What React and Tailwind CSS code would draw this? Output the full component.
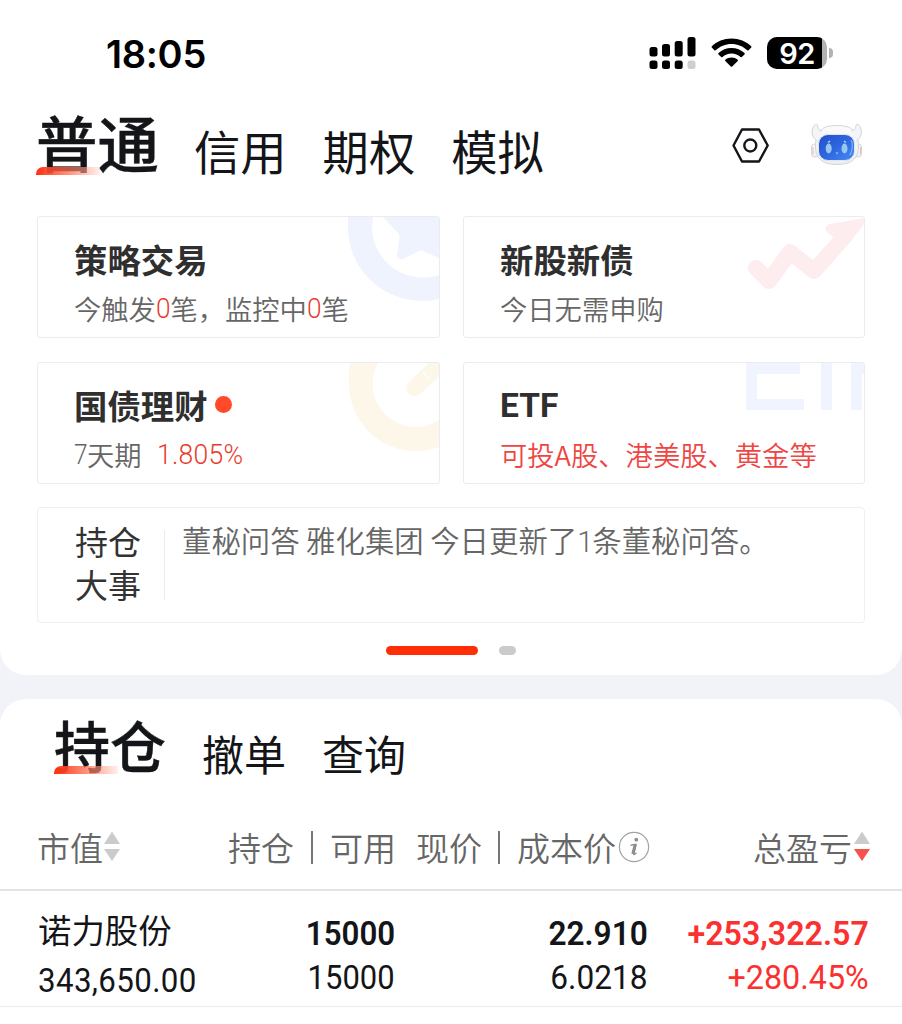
import React from "react";

const CJK = "font-['Noto_Sans_CJK_SC',sans-serif]";

function Num({ children, className = "" }) {
  return (
    <span className={`inline-block whitespace-nowrap font-['Roboto',sans-serif] ${className}`}>
      {children}
    </span>
  );
}

function StatusBar() {
  return (
    <header className="flex h-[107px] items-start justify-between pl-[106px] pr-[69px] pt-[34px]">
      <div className="font-['Inter',sans-serif] text-[38px] font-semibold leading-[40px] tracking-[-0.3px] text-black">
        18:05
      </div>
      <div className="flex items-start pt-[3px]">
        <svg width="47" height="33" viewBox="0 0 47 33" className="mr-[15px]">
          <g fill="#000">
            <rect x="0.5" y="10" width="8" height="9.5" rx="2.5" />
            <rect x="13" y="7" width="8" height="12.5" rx="2.5" />
            <rect x="25.7" y="4" width="8" height="15.5" rx="2.5" />
            <rect x="38.5" y="0" width="8" height="19.5" rx="2.5" />
            <rect x="0.5" y="23.5" width="8" height="8.5" rx="2.5" />
            <rect x="13" y="23.5" width="8" height="8.5" rx="2.5" />
            <rect x="25.7" y="23.5" width="8" height="8.5" rx="2.5" />
          </g>
          <rect x="38.5" y="23.5" width="8" height="8.5" rx="2.5" fill="#cfcfcf" />
        </svg>
        <svg width="42" height="33" viewBox="0 0 42 33" className="mr-[14px]">
          <path d="M20.5 1.5C12.8 1.5 5.8 4.5.8 9.3c-.4.4-.4.9 0 1.3l2.6 2.6c.4.4.9.4 1.3 0C8.800 9.300 14.400 6.900 20.500 6.900s11.700 2.400 15.800 6.300c.4.4.9.4 1.300 0l2.600-2.600c.4-.4.4-.9 0-1.300C35.200 4.500 28.200 1.500 20.500 1.500Z" />
          <path d="M20.500 11c-5 0-9.600 1.900-13 5.100-.4.4-.4.9 0 1.300l2.700 2.700c.4.4.9.3 1.300 0 2.400-2.200 5.500-3.600 9-3.600s6.600 1.400 9 3.600c.4.3.9.4 1.300 0l2.700-2.700c.4-.4.4-.9 0-1.300-3.400-3.200-8-5.100-13-5.100Z" />
          <path d="M20.500 20.400c-2.400 0-4.500.9-6.200 2.300-.4.4-.4.9 0 1.300l5.500 5.500c.4.4 1 .4 1.400 0l5.500-5.500c.4-.4.4-.9 0-1.300-1.700-1.400-3.800-2.300-6.200-2.300Z" />
        </svg>
        <div className="flex items-center">
          <div className="flex h-[32px] w-[60px] overflow-hidden rounded-[10px] bg-[#b3b3b3]">
            <div className="flex w-[55px] items-center justify-center bg-black pl-[5px] font-['Inter',sans-serif] text-[29px] font-semibold leading-none tracking-[-0.5px] text-white">
              92
            </div>
          </div>
          <div className="ml-[2px] h-[10px] w-[4px] rounded-r-full bg-[#b3b3b3]" />
        </div>
      </div>
    </header>
  );
}

function Robot() {
  return (
    <svg width="54" height="44" viewBox="0 0 54 44">
      <defs>
        <linearGradient id="shell" x1="0" y1="0" x2="0" y2="1">
          <stop offset="0" stopColor="#fbfbfc" />
          <stop offset="1" stopColor="#eceef1" />
        </linearGradient>
        <linearGradient id="screen" x1="0" y1="0" x2="1" y2="1">
          <stop offset="0" stopColor="#2450c8" />
          <stop offset="0.5" stopColor="#2d66e0" />
          <stop offset="1" stopColor="#4a8df5" />
        </linearGradient>
      </defs>
      <g fill="url(#shell)" stroke="#d2d5d9" strokeWidth="1">
        <rect x="1.500" y="21" width="7" height="13" rx="3" />
        <rect x="44.500" y="21" width="7" height="13" rx="3" />
        <path d="M27 2.500c8 0 13 1.500 16 4.500 4 4.500 5.500 9.500 5.500 16 0 12-6 18.500-21.500 18.500S5.500 35 5.500 23c0-6.500 1.500-11.500 5.500-16 3-3 8-4.500 16-4.500Z" />
      </g>
      <g fill="#f4f5f7">
        <path d="M12 8Q8 7.500 7.500 2.500 7 .5 5.500 1.500C1.500 4 .8 11.500 4.500 15.500l3 3" stroke="#d2d5d9" strokeWidth="1" />
        <path d="M41.500 8Q45.500 7.500 46 2.500 46.500.5 48 1.500c4 2.500 4.700 10 1 14l-3 3" stroke="#d2d5d9" strokeWidth="1" />
      </g>
      <path d="M3 24v7M50.500 24v7" stroke="#f0b9ac" strokeWidth="1" />
      <rect x="8.500" y="11.500" width="36" height="26" rx="9.500" fill="url(#screen)" stroke="#dfe5f2" strokeWidth="1" />
      <path d="M41 17c2 3 2 10-1 15" fill="none" stroke="#82b4fa" strokeWidth="1.200" />
      <ellipse cx="18.700" cy="25.500" rx="3" ry="5" fill="#9ac7f2" />
      <ellipse cx="34.500" cy="25.500" rx="3" ry="5" fill="#9ac7f2" />
      <path d="M18 19.500l2-1.500M34 18l2 1.500" stroke="#b9daf8" strokeWidth="1.300" />
      <path d="M25.500 29.500h3l-1.500 2Z" fill="#9ac7f2" />
    </svg>
  );
}

function AccountTabs() {
  return (
    <nav className="flex h-[109px] items-start justify-between pl-[36px] pr-[38px] text-[#141518]">
      <div className="flex">
        <div className="relative mt-[3px] text-[61.500px] font-medium leading-[64px] [-webkit-text-stroke:0.4px_#141518]">
          普通
          <span className="absolute left-0 top-[57px] h-[8px] w-[64px] rounded-tl-[7px] bg-gradient-to-r from-[#ff2d05] via-[#ff6a4ec0] to-[#ffe2db80]" />
        </div>
        <div className="ml-[35px] mt-[19px] flex gap-[36px] text-[46.300px] leading-[48px]">
          <span>信用</span>
          <span>期权</span>
          <span>模拟</span>
        </div>
      </div>
      <div className="flex items-start pt-[16px]">
        <svg width="38" height="46" viewBox="0 0 38 46" fill="none" stroke="#141518" strokeWidth="2.400" strokeLinejoin="round" className="mr-[40px]">
          <path d="M10 6.500h17l8.700 16-8.700 16H10l-8.500-16Z" />
          <circle cx="18.300" cy="22.500" r="6" />
        </svg>
        <Robot />
      </div>
    </nav>
  );
}

function Card({ title, dot, children, art }) {
  return (
    <section className="relative h-[122px] overflow-hidden rounded-[3px] border-[1.500px] border-[#ebecf2] pl-[36px] pt-[23px]">
      <div className="absolute right-0 top-0">{art}</div>
      <h2 className="relative flex items-center text-[33.400px] font-bold leading-[38px] text-[#2f2f30]">
        {title}
        {dot && <span className="mb-px ml-[7px] size-[17px] rounded-full bg-[#ff4b29]" />}
      </h2>
      <div className="relative mt-[13px] flex whitespace-pre text-[27.300px] font-[350] leading-[34px] text-[#666]">
        {children}
      </div>
    </section>
  );
}

function StarArt() {
  return (
    <svg width="92" height="90" viewBox="0 0 92 90" fill="#eff3fe">
      <path d="M1 0V11A75 73 0 0 0 76 84Q85 84 92 82V58A51 51 0 0 1 25 12Q25 6 26 0Z" />
      <path d="M36 0 51 16Q53 18 52.500 21L50 37Q50 44 56 42L74 33 92 41V0Z" />
    </svg>
  );
}

function TrendArt() {
  return (
    <svg width="117" height="76" viewBox="0 0 117 76">
      <path d="M9 51 22 64 43 35 67 54 99 18" fill="none" stroke="#feedee" strokeWidth="16" strokeLinecap="round" strokeLinejoin="round" />
      <path d="M117 1 83 7q-6 2-4 7l7 6 21 0L117 7Z" fill="#feedee" />
    </svg>
  );
}

function CoinArt() {
  return (
    <svg width="92" height="90" viewBox="0 0 92 90">
      <path d="M3 0A66 66 0 0 0 2 20A67 67 0 0 0 92 84V57A43 43 0 0 1 31 0Z" fill="#fcf7e9" />
      <path d="M92 0H82L62 19a8 8 0 0 0 11 12l19-17Z" fill="#fcf7e9" />
      <path d="M76 9l6 7" stroke="#fff" strokeWidth="1.500" />
    </svg>
  );
}

function EtfArt() {
  return (
    <svg width="118" height="48" viewBox="0 0 118 48" fill="#eff4ff">
      <path d="M0 0H54V11H11V36H58V47H0ZM75 0H86V47H75ZM105 0H118V11H116V47H105Z" />
    </svg>
  );
}

function Arrows({ active }) {
  return (
    <svg width="16" height="31" viewBox="0 0 16 31">
      <path d="M8 0.500l8 12.500H0Z" fill="#cbcbcb" />
      <path d="M0 18h16L8 30Z" fill={active ? "#f4514f" : "#cbcbcb"} />
    </svg>
  );
}

function Info() {
  return (
    <svg width="32" height="32" viewBox="0 0 32 32">
      <circle cx="16" cy="16" r="14.600" fill="none" stroke="#a2a2a2" strokeWidth="1.200" />
      <circle cx="18.300" cy="8.700" r="1.900" fill="#8d8d8d" />
      <path d="M12.500 14.300l4-.8h1.500l-2.300 9.300q-.2 1 .8.600l2-1.600" fill="none" stroke="#8d8d8d" strokeWidth="1.300" />
      <path d="M17.300 13.500l-2.500 9.500" stroke="#8d8d8d" strokeWidth="3" />
    </svg>
  );
}

function Bar() {
  return <span className="inline-block h-[33px] w-[2px] bg-[#767676]" />;
}

export default function App() {
  return (
    <div className={`h-[1024px] w-[902px] overflow-hidden bg-[#f2f3f8] ${CJK}`}>
      <div className="h-[675px] rounded-b-[26px] bg-white">
        <StatusBar />
        <AccountTabs />
        <div className="mx-[37px] grid grid-cols-[403px_402px] gap-x-[23px] gap-y-[24px]">
          <Card title="策略交易" art={<StarArt />}>
            今触发<Num className="w-[14.500px] origin-left translate-y-px scale-x-[.92] text-[28.500px] text-[#e93b2c]">0</Num>笔，监控中
            <Num className="w-[14.500px] origin-left translate-y-px scale-x-[.92] text-[28.500px] text-[#e93b2c]">0</Num>笔
          </Card>
          <Card title="新股新债" art={<TrendArt />}>今日无需申购</Card>
          <Card title="国债理财" dot art={<CoinArt />}>
            <Num className="w-[13px] origin-left translate-y-px scale-x-[.86] text-[28.500px]">7</Num>天期
            <Num className="ml-[15px] origin-left translate-y-px scale-x-[.93] text-[28.500px] tracking-[0.3px] text-[#e93b2c]">1.805%</Num>
          </Card>
          <Card title={<Num className="translate-y-px text-[33.500px] font-bold">ETF</Num>} art={<EtfArt />}>
            <span className="text-[#ef4643]">可投A股、港美股、黄金等</span>
          </Card>
        </div>
        <section className="mx-[37px] mt-[23px] flex h-[116px] rounded-[4px] border border-[#efeff2] pl-[37px]">
          <h3 className="mt-[12px] w-[89px] text-[33px] leading-[43px] text-[#333]">
            持仓
            <br />
            大事
          </h3>
          <div className="mt-[22px] h-[70px] w-px bg-[#ececf0]" />
          <p className="ml-[17px] mt-[12px] text-[29.400px] font-[350] leading-[38px] text-[#666]">
            董秘问答 雅化集团 今日更新了<Num className="text-[29px] tracking-[-1px]">1</Num>条董秘问答。
          </p>
        </section>
        <div className="mt-[23px] flex gap-[21px] pl-[386px]">
          <span className="h-[9px] w-[92px] rounded-full bg-[#ff2e06]" />
          <span className="h-[9px] w-[17px] rounded-full bg-[#cbcbcb]" />
        </div>
      </div>

      <div className="mt-[24px] h-[325px] rounded-t-[26px] bg-white">
        <nav className="flex h-[132px] pl-[54px] pt-[15px] text-[#141518]">
          <div className="relative text-[56px] font-medium leading-[60px] [-webkit-text-stroke:0.4px_#141518]">
            持仓
            <span className="absolute left-0 top-[52px] h-[8px] w-[64px] rounded-tl-[7px] bg-gradient-to-r from-[#ff2d05] via-[#ff6a4ec0] to-[#ffe2db80]" />
          </div>
          <div className="ml-[36px] mt-[17px] flex gap-[36px] text-[42px] leading-[44px]">
            <span>撤单</span>
            <span>查询</span>
          </div>
        </nav>
        <div className="flex h-[60px] items-start border-b-2 border-[#e3e4ea] pl-[37px] text-[33px] font-[350] leading-[32px] text-[#666]">
          <div className="flex w-[191px] gap-px">
            市值
            <Arrows />
          </div>
          <div className="flex w-[188px] gap-[17px]">
            持仓
            <Bar />
            可用
          </div>
          <div className="flex w-[337px]">
            现价
            <span className="ml-[16px] mr-[17px]">
              <Bar />
            </span>
            成本价
            <span className="ml-[2px]">
              <Info />
            </span>
          </div>
          <div className="flex gap-[2px]">
            总盈亏
            <Arrows active />
          </div>
        </div>
        <div className="flex h-[116px] border-b border-[#ececef] pl-[38px] pr-[33px] pt-[16px] text-[34px] leading-[44px] text-[#141518]">
          <div className="w-[180px]">
            <div className="text-[33.400px] leading-[44px]">诺力股份</div>
            <Num className="mt-[7px] origin-left scale-x-[.92] tracking-[0.4px]">343,650.00</Num>
          </div>
          <div className="flex w-[177px] flex-col items-end pt-[4px]">
            <Num className="origin-right scale-x-[.92] font-semibold">15000</Num>
            <Num className="origin-right scale-x-[.91]">15000</Num>
          </div>
          <div className="flex w-[253px] flex-col items-end pt-[4px]">
            <Num className="origin-right scale-x-[.93] font-semibold">22.910</Num>
            <Num className="origin-right scale-x-[.93]">6.0218</Num>
          </div>
          <div className="flex w-[221px] flex-col items-end pt-[4px] text-[#fa3130]">
            <Num className="origin-right scale-x-[.945] font-semibold">+253,322.57</Num>
            <Num className="origin-right scale-x-[.95]">+280.45%</Num>
          </div>
        </div>
      </div>
    </div>
  );
}
